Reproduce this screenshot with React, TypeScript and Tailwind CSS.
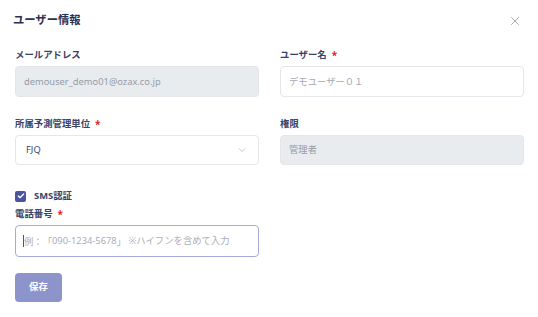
import { X, ChevronDown, Check } from "lucide-react";

function Label({ children, required }: { children: React.ReactNode; required?: boolean }) {
  return (
    <div className="flex h-[16px] items-center gap-[5px] text-[9.4px] font-bold leading-none text-[#3a4266]">
      <span>{children}</span>
      {required && <span className="text-[10px] text-[#e02424]">*</span>}
    </div>
  );
}

export default function App() {
  return (
    <div className="h-[317px] w-[538px] bg-white pl-[15px] pr-[14px] font-['Noto_Sans','Noto_Sans_CJK_JP',sans-serif] [text-spacing-trim:space-all]">
      <div className="flex h-[40px] items-center justify-between">
        <h2 className="-ml-[2px] pt-[1px] text-[11.3px] font-bold text-[#2b3150]">ユーザー情報</h2>
        <X className="mr-[2px] mt-[2px] h-[14px] w-[14px] text-[#9aa0a8]" strokeWidth={1.5} />
      </div>

      <div className="mt-[7px] grid grid-cols-2 gap-x-[21px]">
        <div>
          <Label>メールアドレス</Label>
          <div className="mt-[3px] flex h-[31px] items-center rounded-[4px] border border-[#e4e6eb] bg-[#e9ecef] px-[8px] text-[9.33px] text-[#959ba6]">
            demouser_demo01@ozax.co.jp
          </div>
        </div>
        <div>
          <Label required>ユーザー名</Label>
          <div className="mt-[3px] flex h-[31px] items-center rounded-[4px] border border-[#e4e6eb] bg-white px-[8px] text-[9.33px] text-[#a3a8b1]">
            デモユーザー０１
          </div>
        </div>

        <div className="mt-[19px]">
          <Label required>所属予測管理単位</Label>
          <div className="mt-[3px] flex h-[30px] items-center justify-between rounded-[4px] border border-[#e4e6eb] bg-white pl-[10px] pr-[10px] text-[9.33px] text-[#3f4654]">
            <span>FJQ</span>
            <ChevronDown className="h-[12px] w-[12px] text-[#b4b8c0]" strokeWidth={1.5} />
          </div>
        </div>
        <div className="mt-[19px]">
          <Label>権限</Label>
          <div className="mt-[3px] flex h-[30px] items-center rounded-[4px] border border-[#e4e6eb] bg-[#e9ecef] px-[8px] text-[9.33px] text-[#959ba6]">
            管理者
          </div>
        </div>
      </div>

      <div className="mt-[25px] flex h-[12px] items-center gap-[8px]">
        <span className="flex h-[11px] w-[11px] items-center justify-center rounded-[2px] bg-[#4a54a1]">
          <Check className="h-[8px] w-[8px] text-white" strokeWidth={4} />
        </span>
        <span className="text-[9.4px] font-bold text-[#3a4266]">SMS認証</span>
      </div>
      <div className="mt-[4px] w-[244px]">
        <Label required>電話番号</Label>
        <div className="mt-[3px] flex h-[32px] items-center whitespace-nowrap rounded-[4px] border border-[#a4abdc] bg-white px-[7px] text-[9.33px] text-[#a9aeb6]">
          <span className="h-[12px] w-px bg-[#555]" />
          <span className="font-['Noto_Sans_CJK_JP',sans-serif]">例：「</span>
          090-1234-5678
          <span className="font-['Noto_Sans_CJK_JP',sans-serif]">」</span>
          &nbsp;※ハイフンを含めて入力
        </div>
      </div>

      <button
        type="button"
        className="mt-[16px] flex h-[29px] w-[47px] items-center justify-center rounded-[4px] bg-[#8c94cb] text-[9.4px] font-bold text-white"
      >
        保存
      </button>
    </div>
  );
}
